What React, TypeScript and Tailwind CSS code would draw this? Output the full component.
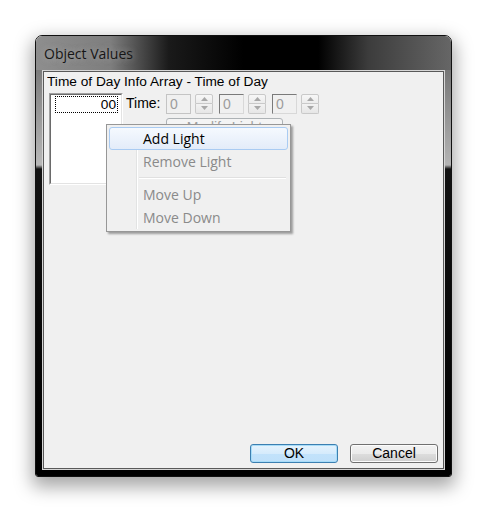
import React from 'react';

const Spin: React.FC = () => (
  <div className="flex h-[20px] w-[18px] flex-col">
    <div className="flex h-[10px] items-center justify-center rounded-t-[2px] border border-[#c9c9c9] bg-[linear-gradient(to_bottom,#f7f7f7,#ececec)]">
      <svg width="7" height="4" viewBox="0 0 7 4">
        <path d="M0 4 L3.5 0 L7 4 Z" fill="#a8a8a8" />
      </svg>
    </div>
    <div className="flex h-[10px] items-center justify-center rounded-b-[2px] border border-t-0 border-[#c9c9c9] bg-[linear-gradient(to_bottom,#f2f2f2,#e6e6e6)]">
      <svg width="7" height="4" viewBox="0 0 7 4">
        <path d="M0 0 L3.5 4 L7 0 Z" fill="#a8a8a8" />
      </svg>
    </div>
  </div>
);

const Edit: React.FC<{ dark?: boolean }> = ({ dark }) => (
  <div
    className={
      dark
        ? 'h-[20px] w-[25px] border border-t-[#7a7a7a] border-l-[#7a7a7a] border-b-[#d8d8d8] border-r-[#d8d8d8] bg-[#f0f0f0] pl-[3px] text-[14px] leading-[18px] text-[#9c9c9c]'
        : 'h-[20px] w-[25px] border border-[#c4c4c4] bg-[#f0f0f0] pl-[3px] text-[14px] leading-[18px] text-[#9c9c9c]'
    }
  >
    0
  </div>
);

const MenuItem: React.FC<{ label: string; active?: boolean; disabled?: boolean }> = ({ label, active, disabled }) => (
  <div
    className={
      active
        ? 'relative flex h-[23px] items-center rounded-[3px] border border-[#a9cbf2] bg-[linear-gradient(to_bottom,#f5f9fe,#e3ecf9)] pl-[33px] text-[14px] text-black'
        : 'relative flex h-[23px] items-center border border-transparent pl-[33px] text-[14px] ' + (disabled ? 'text-[#8a8a8a]' : 'text-black')
    }
  >
    {label}
  </div>
);

const App: React.FC = () => {
  return (
    <div className="h-[513px] w-[487px] bg-white pl-[35px] pt-[35px]">
      <div className="flex h-[442px] w-[417px] flex-col overflow-hidden rounded-t-[7px] rounded-b-[3px] border border-[#111] shadow-[0_7px_18px_3px_rgba(0,0,0,0.35)]">
        {/* title bar */}
        <div className="flex h-[34px] items-center bg-[linear-gradient(to_right,#8e8e8e_0%,#7e7e7e_18%,#1a1a1a_32%,#000_50%,#000_68%,#3c3c3c_80%,#666_100%)] pl-[8px] font-['Open_Sans',sans-serif] text-[14px] text-[#161616] [text-shadow:0_0_6px_rgba(200,200,200,0.6)]">
          Object Values
        </div>

        <div className="flex h-[400px]">
          <div className="w-[6px] bg-[linear-gradient(to_bottom,#7c7c7c_0px,#b8b8b8_95px,#121212_99px,#000_100%)]" />
          <div className="w-[403px] border border-[#d6d6d6]">
            <div className="relative flex h-full flex-col border border-[#595959] bg-[#f0f0f0] font-['Liberation_Sans',Arial,sans-serif] text-[13.7px] text-black">
              <div className="ml-[3px] mt-[2px] h-[15px] overflow-hidden leading-[16px]">Time of Day Info Array - Time of Day</div>

              <div className="mt-[4px] flex">
                {/* list box */}
                <div className="ml-[5px] h-[92px] w-[74px] border border-t-[#a0a0a0] border-l-[#a0a0a0] border-b-[#ffffff] border-r-[#ffffff]">
                  <div className="h-full w-full border border-t-[#6a6a6a] border-l-[#6a6a6a] border-b-[#e3e3e3] border-r-[#e3e3e3] bg-white pl-[4px] pr-[3px] pt-[1px]">
                    <div className="h-[17px] border border-dotted border-black pr-[1px] text-right leading-[15px]">00</div>
                  </div>
                </div>

                <div className="ml-[3px] flex flex-col">
                  <div className="flex items-center">
                    <span className="w-[40px] text-[14px]">Time:</span>
                    <Edit />
                    <div className="ml-[4px]"><Spin /></div>
                    <div className="ml-[6px]"><Edit dark /></div>
                    <div className="ml-[4px]"><Spin /></div>
                    <div className="ml-[6px]"><Edit dark /></div>
                    <div className="ml-[4px]"><Spin /></div>
                  </div>
                  <div className="ml-[40px] mt-[4px] flex h-[23px] w-[117px] items-start justify-center rounded-[3px] border border-[#adb2b5] bg-[#f4f4f4] text-[14px] leading-[16px] text-[#a0a0a0]">
                    Modify Light
                  </div>
                </div>
              </div>

              <div className="flex-1" />

              <div className="flex justify-end gap-[12px] pb-[5px] pr-[5px] text-[14px]">
                <div className="flex h-[19px] w-[88px] items-center justify-center rounded-[3px] border border-[#3c7fb1] bg-[linear-gradient(to_bottom,#e5f3fd_0%,#d6ebfc_50%,#c2e2fb_51%,#bfe0fa_100%)] shadow-[inset_0_0_0_1px_#a7dcf8]">
                  OK
                </div>
                <div className="flex h-[19px] w-[88px] items-center justify-center rounded-[3px] border border-[#707070] bg-[linear-gradient(to_bottom,#f2f2f2_0%,#ebebeb_50%,#dddddd_51%,#cfcfcf_100%)] shadow-[inset_0_0_0_1px_#fcfcfc]">
                  Cancel
                </div>
              </div>

              {/* context menu */}
              <div className="absolute left-[62px] top-[52px] flex h-[108px] w-[185px] flex-col border border-[#979797] bg-[#f0f0f0] px-[2px] pb-[2px] pt-[2px] font-['Open_Sans',sans-serif] shadow-[2px_2px_2px_rgba(0,0,0,0.35)]">
                <div className="absolute bottom-[2px] left-[29px] top-[2px] w-[2px] border-l border-r border-l-[#e2e3e3] border-r-white" />
                <MenuItem label="Add Light" active />
                <MenuItem label="Remove Light" disabled />
                <div className="relative flex h-[11px] items-center pl-[30px] pr-[2px]">
                  <div className="h-[2px] w-full border-b border-t border-b-white border-t-[#e0e0e0]" />
                </div>
                <MenuItem label="Move Up" disabled />
                <MenuItem label="Move Down" disabled />
              </div>
            </div>
          </div>
          <div className="w-[6px] bg-[linear-gradient(to_bottom,#777_0px,#b4b4b4_95px,#121212_99px,#000_100%)]" />
        </div>

        <div className="flex-1 bg-black" />
      </div>
    </div>
  );
};

export default App;
